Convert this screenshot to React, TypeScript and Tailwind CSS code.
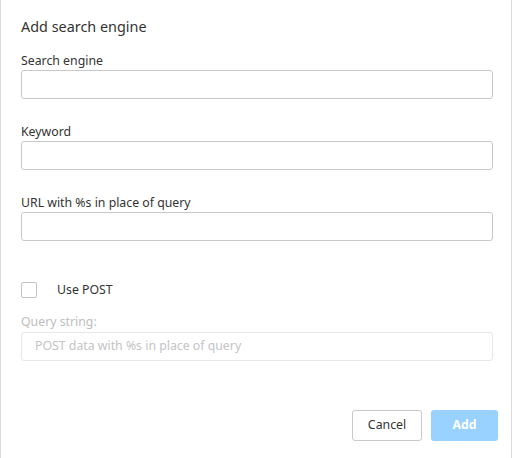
import React from "react";

const Field = ({ label }: { label: string }) => (
  <div className="flex flex-col">
    <label className="text-[12.3px] leading-[16px] text-[#333]">{label}</label>
    <input className="mt-[1px] h-[29px] w-full rounded-[3px] border border-[#c8c8c8] bg-white px-2 text-[13px] outline-none" />
  </div>
);

export default function App() {
  return (
    <div className="h-[458px] w-[514px] bg-white" style={{ fontFamily: "'Noto Sans', 'Open Sans', sans-serif" }}>
      <div className="flex h-full w-[512px] flex-col border-x border-[#d9d9d9] pl-[20px] pr-[18px] pb-[17px]">
        <h1 className="mt-[16px] text-[14.4px] leading-[22px] text-[#333]">Add search engine</h1>
        <div className="mt-[15px] flex flex-col gap-[25px]">
          <Field label="Search engine" />
          <Field label="Keyword" />
          <Field label="URL with %s in place of query" />
        </div>
        <div className="mt-[41px] flex h-[16px] items-center">
          <span className="h-[16px] w-[16px] rounded-[2px] border border-[#c4c4c4]" />
          <span className="ml-[20px] text-[12.3px] text-[#333]">Use POST</span>
        </div>
        <div className="mt-[16px] flex flex-col">
          <label className="text-[12.3px] leading-[16px] text-[#bdbdbd]">Query string:</label>
          <div className="mt-[2px] flex h-[29px] items-center rounded-[3px] border border-[#e6e6e6] px-[13px] text-[12.3px] text-[#c4c4c4]">
            POST data with %s in place of query
          </div>
        </div>
        <div className="mt-auto flex justify-end gap-[9px]">
          <button className="h-[31px] w-[70px] rounded-[3px] border border-[#c8c8c8] bg-white text-[12.3px] text-[#333]">Cancel</button>
          <button className="mr-[-5px] h-[31px] w-[67px] rounded-[3px] bg-[#99d1ff] text-[12.3px] font-bold text-white">Add</button>
        </div>
      </div>
    </div>
  );
}
